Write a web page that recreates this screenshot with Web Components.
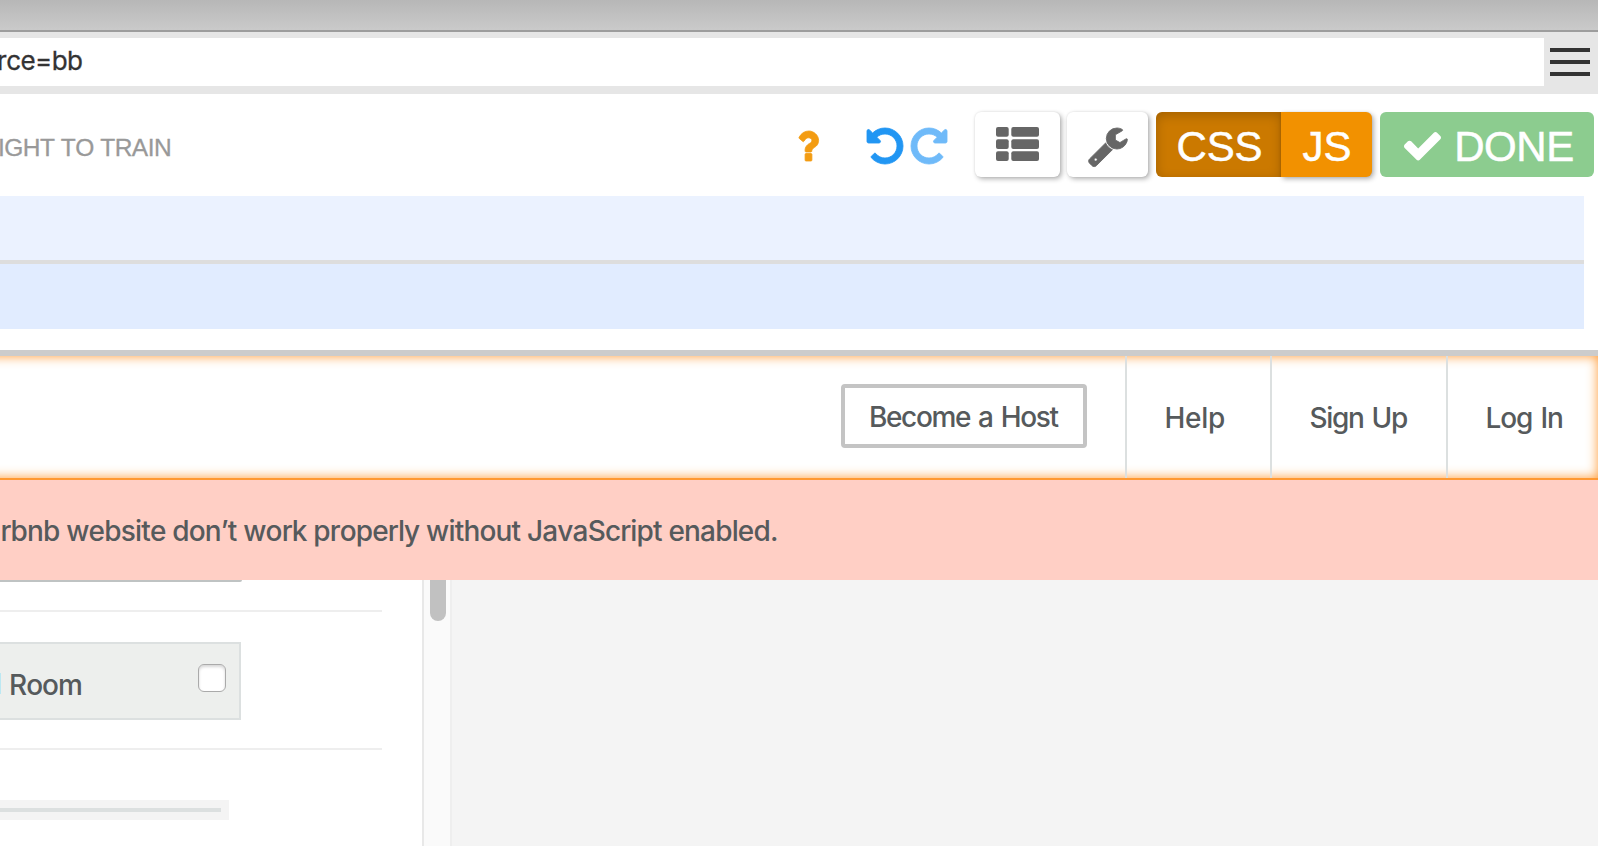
<!DOCTYPE html>
<html lang="en">
<head>
<meta charset="utf-8">
<title>Trainer</title>
<style>
html,body{margin:0;height:846px;overflow:hidden;background:#fff}
body{font-family:Inter,"Liberation Sans",sans-serif}
</style>
</head>
<body>
<trainer-app></trainer-app>
<script>
const define = (name, html, init) => customElements.define(name, class extends HTMLElement {
  constructor() {
    super();
    const t = document.createElement('template');
    t.innerHTML = html;
    this.attachShadow({mode: 'open'}).appendChild(t.content.cloneNode(true));
  }
  connectedCallback() { if (init) init.call(this); }
});

/* A label whose ink is tracked to span exactly the given width; ws widens its word gaps. */
define('fit-text', `<style>:host{display:block;white-space:pre;flex:none;font-kerning:none}span{display:block}</style><span><slot></slot></span>`, function () {
  const text = this.textContent, w = +this.getAttribute('w'), ws = +this.getAttribute('ws') || 0;
  const cs = getComputedStyle(this), ctx = document.createElement('canvas').getContext('2d');
  ctx.font = `${cs.fontWeight} ${cs.fontSize} ${cs.fontFamily}`;
  ctx.fontKerning = 'none';
  const m = ctx.measureText(text);
  const ink = m.actualBoundingBoxLeft + m.actualBoundingBoxRight + ws * (text.split(' ').length - 1);
  this.style.width = w + 'px';
  const s = this.shadowRoot.querySelector('span');
  s.style.wordSpacing = ws + 'px';
  s.style.letterSpacing = (w - ink) / (text.length - 1) + 'px';
  s.style.marginLeft = m.actualBoundingBoxLeft + 'px';
});

const ICONS = {
  undo: ['128 128 1536 1536', '<path d="M1664 896q0 156-61 298t-164 245-245 164-298 61q-172 0-327-72.5t-264-204.5q-7-10-6.5-22.5t8.5-20.5l137-138q10-9 25-9 16 2 23 12 73 95 179 147t225 52q104 0 198.5-40.5t163.5-109.5 109.5-163.5 40.5-198.5-40.5-198.5-109.5-163.5-163.5-109.5-198.5-40.5q-98 0-188 35.5t-160 101.5l137 138q31 30 14 69-17 40-59 40h-448q-26 0-45-19t-19-45v-448q0-42 40-59 39-17 69 14l130 129q107-101 244.5-156.5t284.5-55.5q156 0 298 61t245 164 164 245 61 298z"/>'],
  help: ['386 256 1018 1280', '<path d="M1088 1256v240q0 16-12 28t-28 12h-240q-16 0-28-12t-12-28v-240q0-16 12-28t28-12h240q16 0 28 12t12 28zm316-600q0 54-15.5 101t-35 76.5-55 59.5-57.5 43.5-61 35.5q-41 23-68.5 65t-27.5 67q0 17-12 32.5t-28 15.5h-240q-15 0-25.5-18.5t-10.5-37.5v-45q0-83 65-156.5t143-108.5q59-27 84-56t25-76q0-42-46.5-74t-107.5-32q-65 0-108 29-35 25-107 115-13 16-31 16-12 0-25-8l-164-125q-13-10-15.5-25t5.5-28q160-266 464-266 80 0 161 31t146 83 106 127.5 41 158.5z"/>'],
  wrench: ['100 128 1626 1643', '<path d="M448 1472q0-26-19-45t-45-19-45 19-19 45 19 45 45 19 45-19 19-45zm644-420l-682 682q-37 37-90 37-52 0-91-37l-106-108q-38-36-38-90 0-53 38-91l681-681q39 98 114.5 173.5t173.5 114.5zm634-435q0 39-23 106-47 134-164.5 217.5t-258.5 83.5q-185 0-316.5-131.5t-131.5-316.5 131.5-316.5 316.5-131.5q58 0 121.5 16.5t107.5 46.5q16 11 16 28t-16 28l-293 169v224l193 107q5-3 79-48.5t135.5-81 70.5-35.5q15 0 23.5 10t8.5 25z"/>'],
  check: ['121 334 1550 1188', '<path d="M1671 566q0 40-28 68l-724 724-136 136q-28 28-68 28t-68-28l-136-136-362-362q-28-28-28-68t28-68l136-136q28-28 68-28t68 28l294 295 656-657q28-28 68-28t68 28l136 136q28 28 28 68z"/>'],
  list: ['0 0 43 34', [0, 12.2, 24.3].map(y => `<rect x="0" y="${y}" width="12.7" height="9.8" rx="2"/><rect x="15.3" y="${y}" width="27.7" height="9.8" rx="2"/>`).join('')],
  menu: ['0 0 40 28', '<path d="M0 0h40v4H0zM0 12h40v4H0zM0 24h40v4H0z"/>']
};
define('ui-icon', `<style>:host{display:block;flex:none}svg{display:block;width:100%;height:100%;overflow:visible;fill:currentColor}:host([flip]) svg{transform:scaleX(-1)}:host([bold]) svg{stroke:currentColor;stroke-width:36;stroke-linejoin:round}</style><svg preserveAspectRatio="none"></svg>`, function () {
  const [box, body] = ICONS[this.getAttribute('name')];
  const svg = this.shadowRoot.querySelector('svg');
  svg.setAttribute('viewBox', box);
  svg.innerHTML = body;
});

define('window-chrome', `<style>
:host{display:block;height:94px;background:#e6e6e6}
.title{height:30px;background:linear-gradient(#b7b7b7,#cacaca);border-bottom:2px solid #9d9d9d}
.row{display:flex;align-items:flex-start;padding-top:6px}
.url{box-sizing:border-box;width:1544px;height:48px;background:#fff;display:flex;align-items:center;padding-bottom:3px;color:#333;font-size:26px}
fit-text{margin-left:-1px;-webkit-text-stroke:.3px #333}
ui-icon{width:40px;height:28px;margin:10px 0 0 6px;color:#333}
</style>
<div class="title"></div><div class="row"><div class="url"><fit-text w="83">rce=bb</fit-text></div><ui-icon name="menu"></ui-icon></div>`);

define('tool-button', `<style>
:host{box-sizing:border-box;display:flex;align-items:center;justify-content:center;height:65px;flex:none;border-radius:6px;background:#fff;box-shadow:2px 2px 5px rgba(0,0,0,.3),0 0 2px rgba(0,0,0,.1)}
</style><slot></slot>`);

define('tool-bar', `<style>
:host{box-sizing:border-box;display:flex;height:102px;padding:18px 4px 0 0;align-items:flex-start;font-family:"Liberation Sans",Arial,sans-serif;font-size:42px;line-height:48px;color:#fff}
.name{font-size:24.5px;line-height:30px;color:#999;margin-top:21px;-webkit-text-stroke:.3px #999}
.help{width:21.6px;height:30px;margin:18.5px 0 0 627px;color:#f39c12}
.undo,.redo{width:36px;height:36px;margin-top:15.5px}
.undo{margin-left:48.8px;color:#2196f3}.redo{margin:15.5px 27.6px 0 8px;color:#6fbaf9}
.list,.wrench{color:#666}
.list{width:85px;margin-right:7px}.list ui-icon{width:43px;height:34px;margin:-1px 0 0 1px}
.wrench{width:81px;margin-right:8px}.wrench ui-icon{width:38.4px;height:38.6px;margin-top:5px;margin-left:2px}
.css{width:125px;border-radius:6px 0 0 6px;background:#cb7900;box-shadow:inset 0 3px 12px rgba(0,0,0,.2)}
.js{width:91px;border-radius:0 6px 6px 0;background:#f29100;margin-right:8px}
.done{width:214px;background:#8ccc8f;box-shadow:none}
.done ui-icon{width:37px;height:28.5px;margin:4px 16.5px 0 3px}
tool-button fit-text{margin-top:4px;-webkit-text-stroke:.5px #fff}
.css fit-text{margin-left:3px}
</style>
<fit-text class="name" w="170">IGHT TO TRAIN</fit-text>
<ui-icon class="help" name="help" bold></ui-icon>
<ui-icon class="undo" name="undo" bold></ui-icon><ui-icon class="redo" name="undo" flip bold></ui-icon>
<tool-button class="list"><ui-icon name="list"></ui-icon></tool-button>
<tool-button class="wrench"><ui-icon name="wrench" bold></ui-icon></tool-button>
<tool-button class="css"><fit-text w="83">CSS</fit-text></tool-button><tool-button class="js"><fit-text w="48">JS</fit-text></tool-button>
<tool-button class="done"><ui-icon name="check"></ui-icon><fit-text w="116">DONE</fit-text></tool-button>`);

define('data-grid', `<style>
:host{box-sizing:border-box;display:block;height:160px;padding-right:14px;border-bottom:6px solid #ccc}
.a{height:64px;background:#ebf2ff;border-bottom:4px solid #ddd}.b{height:65px;background:#e1ecff}
</style><div class="a"></div><div class="b"></div>`);

define('site-nav', `<style>
:host{display:block;height:124px;overflow:hidden;color:#565a5c;font-size:28px;font-weight:500}
.bar{box-sizing:border-box;display:flex;justify-content:flex-end;align-items:stretch;height:124px;margin-left:-24px;border-bottom:2px solid #f93;box-shadow:inset 0 0 12px #f93}
.host{box-sizing:border-box;align-self:flex-start;width:246px;height:64px;margin:28px 38px 0 0;border:4px solid #c4c4c4;border-radius:4px;display:flex;align-items:center;padding:1px 0 0 26px}
.item{box-sizing:border-box;border-left:2px solid #dce0e0;display:flex;align-items:center;padding:2px 0 0 39.5px}
.h{width:145px}.s{width:176px;padding-left:38.5px}.l{width:152px}
</style>
<div class="bar">
<div class="host"><fit-text w="187.5" ws="2">Become a Host</fit-text></div>
<div class="item h"><fit-text w="57.5">Help</fit-text></div>
<div class="item s"><fit-text w="96.5" ws="2">Sign Up</fit-text></div>
<div class="item l"><fit-text w="74.5" ws="2">Log In</fit-text></div>
</div>`);

define('notice-bar', `<style>
:host{box-sizing:border-box;display:flex;height:100px;align-items:center;padding:1px 0 0 2.5px;background:#ffcfc5;color:#565a5c;font-size:28px;font-weight:500}
</style><fit-text w="774.5">rbnb website don’t work properly without JavaScript enabled.</fit-text>`);

define('search-panel', `<style>
:host{display:flex;height:266px;background:#f4f4f4;color:#565a5c;font-size:28px;font-weight:500}
.form{width:422px;background:#fff}
.edge{width:242px;height:2px;background:#bfc3c3;border-radius:0 0 2px 0}
hr{border:0;margin:0;height:2px;width:382px;background:#eee}
.card{box-sizing:border-box;width:241px;height:78px;margin:30px 0 28px;border:2px solid #dce0e0;border-left:0;background:#edefed;display:flex;align-items:flex-start;justify-content:space-between;padding-right:13px}
.cut{width:1px;height:21px;background:#bce8f2;margin:29px 10px 0 0}
.card fit-text{line-height:34px;margin:24px auto 0 0}
.box{box-sizing:border-box;width:28px;height:28px;margin-top:20px;border:1px solid #aaa;border-radius:6px;background:#fff;box-shadow:inset 0 2px 3px rgba(0,0,0,.16)}
.track{box-sizing:border-box;width:229px;height:20px;margin-top:50px;background:#f4f4f4;padding:8px 8px 8px 0}
.track i{display:block;height:4px;background:#dce0e0}
.scroll{box-sizing:border-box;width:30px;border:solid #e8e8e8;border-width:0 2px;border-right-color:#eee;background:#fafafa;padding-left:6px}
.thumb{width:16px;height:41px;background:#c1c1c1;border-radius:0 0 8px 8px}
</style>
<div class="form"><div class="edge"></div><hr style="margin-top:28px">
<div class="card"><span class="cut"></span><fit-text w="70">Room</fit-text><span class="box"></span></div>
<hr><div class="track"><i></i></div></div>
<div class="scroll"><div class="thumb"></div></div>`);

define('trainer-app', `<style>:host{display:block;width:1598px;height:846px;overflow:hidden;background:#fff}</style>
<window-chrome></window-chrome><tool-bar></tool-bar><data-grid></data-grid><site-nav></site-nav><notice-bar></notice-bar><search-panel></search-panel>`);
</script>
</body>
</html>
